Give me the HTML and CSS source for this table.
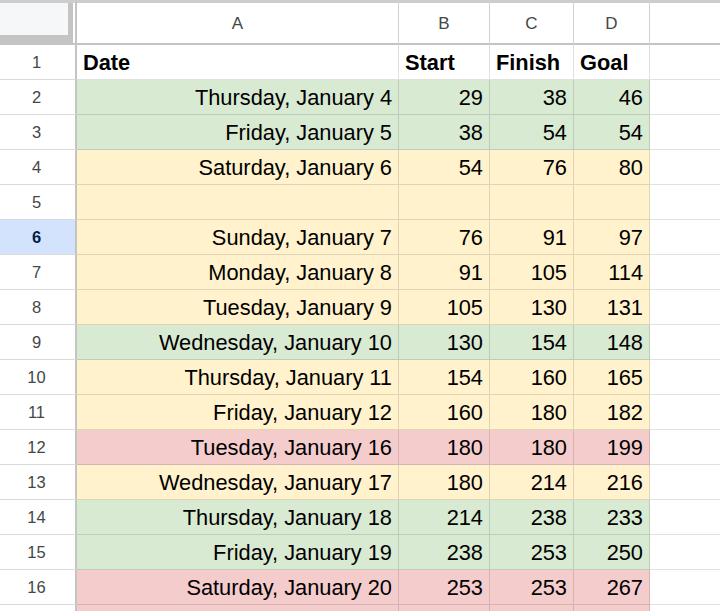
FILE: index.html
```html
<!DOCTYPE html>
<html>
<head>
<meta charset="utf-8">
<link rel="stylesheet" href="styles.css">
</head>
<body>
<div class="sheet">
  <div class="corner"><div class="freeze"></div></div>
  <div class="colhead">A</div>
  <div class="colhead">B</div>
  <div class="colhead">C</div>
  <div class="colhead">D</div>
  <div class="colhead last"></div>

  <div class="rowhead">1</div>
  <div class="cell bold">Date</div>
  <div class="cell bold">Start</div>
  <div class="cell bold">Finish</div>
  <div class="cell bold">Goal</div>
  <div class="cell empty"></div>

  <div class="rowhead">2</div>
  <div class="cell num g">Thursday, January 4</div>
  <div class="cell num g">29</div>
  <div class="cell num g">38</div>
  <div class="cell num g">46</div>
  <div class="cell empty"></div>

  <div class="rowhead">3</div>
  <div class="cell num g">Friday, January 5</div>
  <div class="cell num g">38</div>
  <div class="cell num g">54</div>
  <div class="cell num g">54</div>
  <div class="cell empty"></div>

  <div class="rowhead">4</div>
  <div class="cell num y">Saturday, January 6</div>
  <div class="cell num y">54</div>
  <div class="cell num y">76</div>
  <div class="cell num y">80</div>
  <div class="cell empty"></div>

  <div class="rowhead">5</div>
  <div class="cell num y"></div>
  <div class="cell num y"></div>
  <div class="cell num y"></div>
  <div class="cell num y"></div>
  <div class="cell empty"></div>

  <div class="rowhead selected">6</div>
  <div class="cell num y">Sunday, January 7</div>
  <div class="cell num y">76</div>
  <div class="cell num y">91</div>
  <div class="cell num y">97</div>
  <div class="cell empty"></div>

  <div class="rowhead">7</div>
  <div class="cell num y">Monday, January 8</div>
  <div class="cell num y">91</div>
  <div class="cell num y">105</div>
  <div class="cell num y">114</div>
  <div class="cell empty"></div>

  <div class="rowhead">8</div>
  <div class="cell num y">Tuesday, January 9</div>
  <div class="cell num y">105</div>
  <div class="cell num y">130</div>
  <div class="cell num y">131</div>
  <div class="cell empty"></div>

  <div class="rowhead">9</div>
  <div class="cell num g">Wednesday, January 10</div>
  <div class="cell num g">130</div>
  <div class="cell num g">154</div>
  <div class="cell num g">148</div>
  <div class="cell empty"></div>

  <div class="rowhead">10</div>
  <div class="cell num y">Thursday, January 11</div>
  <div class="cell num y">154</div>
  <div class="cell num y">160</div>
  <div class="cell num y">165</div>
  <div class="cell empty"></div>

  <div class="rowhead">11</div>
  <div class="cell num y">Friday, January 12</div>
  <div class="cell num y">160</div>
  <div class="cell num y">180</div>
  <div class="cell num y">182</div>
  <div class="cell empty"></div>

  <div class="rowhead">12</div>
  <div class="cell num r">Tuesday, January 16</div>
  <div class="cell num r">180</div>
  <div class="cell num r">180</div>
  <div class="cell num r">199</div>
  <div class="cell empty"></div>

  <div class="rowhead">13</div>
  <div class="cell num y">Wednesday, January 17</div>
  <div class="cell num y">180</div>
  <div class="cell num y">214</div>
  <div class="cell num y">216</div>
  <div class="cell empty"></div>

  <div class="rowhead">14</div>
  <div class="cell num g">Thursday, January 18</div>
  <div class="cell num g">214</div>
  <div class="cell num g">238</div>
  <div class="cell num g">233</div>
  <div class="cell empty"></div>

  <div class="rowhead">15</div>
  <div class="cell num g">Friday, January 19</div>
  <div class="cell num g">238</div>
  <div class="cell num g">253</div>
  <div class="cell num g">250</div>
  <div class="cell empty"></div>

  <div class="rowhead">16</div>
  <div class="cell num r">Saturday, January 20</div>
  <div class="cell num r">253</div>
  <div class="cell num r">253</div>
  <div class="cell num r">267</div>
  <div class="cell empty"></div>

  <div class="rowhead"></div>
  <div class="cell num r"></div>
  <div class="cell num r"></div>
  <div class="cell num r"></div>
  <div class="cell num r"></div>
  <div class="cell empty"></div>
</div>
</body>
</html>
```
FILE: styles.css
```css
html, body {
  margin: 0;
  padding: 0;
  background: #ffffff;
  overflow: hidden;
  width: 720px;
  height: 611px;
}

.sheet {
  display: grid;
  grid-template-columns: 77px 322px 91px 84px 76px 1fr;
  grid-template-rows: 45px repeat(17, 35px);
  font-family: "Liberation Sans", Arial, sans-serif;
  width: 720px;
}

.corner {
  box-sizing: border-box;
  border-top: 3px solid #cdcdcd;
  border-bottom: 2px solid #c4c4c4;
  border-right: 2px solid #c4c4c4;
  background: #ffffff;
}

.freeze {
  box-sizing: border-box;
  width: 73px;
  height: 40px;
  background: #f6f7f8;
  border-right: 5px solid #c4c4c4;
  border-bottom: 8px solid #c4c4c4;
}

.colhead {
  box-sizing: border-box;
  border-top: 3px solid #cdcdcd;
  border-bottom: 2px solid #c4c4c4;
  border-right: 1px solid #d2d2d2;
  display: flex;
  align-items: center;
  justify-content: center;
  font-size: 17px;
  color: #444746;
  padding-top: 1px;
}

.colhead.last {
  border-right: none;
}

.rowhead {
  box-sizing: border-box;
  border-right: 2px solid #c4c4c4;
  border-bottom: 1px solid #dadada;
  display: flex;
  align-items: center;
  justify-content: center;
  font-size: 16.5px;
  color: #444746;
  padding-right: 2px;
}

.rowhead.selected {
  background: #d3e3fd;
  color: #041e49;
  font-weight: bold;
}

.cell {
  box-sizing: border-box;
  border-right: 1px solid rgba(0, 0, 0, 0.12);
  border-bottom: 1px solid rgba(0, 0, 0, 0.12);
  font-size: 21.8px;
  line-height: 32px;
  padding: 2px 6px 0 6px;
  color: #000000;
  white-space: nowrap;
  overflow: hidden;
}

.cell.bold {
  font-weight: bold;
  text-align: left;
}

.cell.num {
  text-align: right;
}

.cell.empty {
  border-right: none;
  border-bottom: 1px solid #e1e1e1;
}

.g {
  background: #d9ead3;
}

.y {
  background: #fff2cc;
}

.r {
  background: #f4cccc;
}
```
